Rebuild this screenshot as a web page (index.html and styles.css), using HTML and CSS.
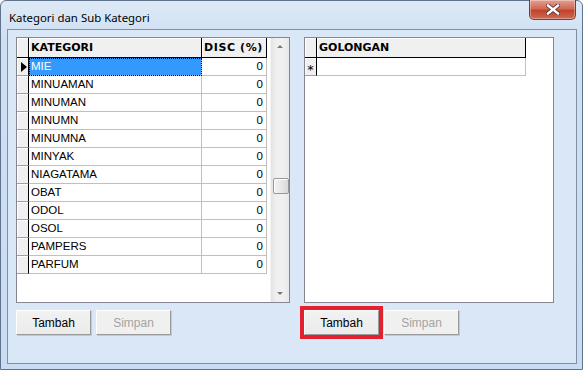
FILE: index.html
```html
<!DOCTYPE html>
<html lang="id">
  <head>
    <meta charset="UTF-8" />
    <title>Kategori dan Sub Kategori</title>
    <link rel="stylesheet" href="styles.css">
  </head>
  <body>
    <div class="window">
      <div class="titlebar">
        <span class="title">Kategori dan Sub Kategori</span>
        <div class="close">
          <svg width="14" height="11" viewBox="0 0 14 11">
            <path d="M2 1.5 L12 9.5 M12 1.5 L2 9.5" stroke="#5a2a22" stroke-width="4" stroke-linecap="square" />
            <path d="M2 1.5 L12 9.5 M12 1.5 L2 9.5" stroke="#ffffff" stroke-width="2.4" stroke-linecap="square" />
          </svg>
        </div>
      </div>

      <div class="client">
        <div class="panels">
          <!-- kategori -->
          <div class="panel panel-left">
            <div class="grid">
              <div class="grid-body">
                <div class="row head">
                  <div class="sel"></div>
                  <div class="cell c-kat">KATEGORI</div>
                  <div class="cell c-disc">DISC (%)</div>
                </div>
                <div class="row">
                  <div class="sel"><span class="pointer"></span></div>
                  <div class="cell c-kat selected">MIE</div>
                  <div class="cell c-disc num">0</div>
                </div>
                <div class="row"><div class="sel"></div><div class="cell c-kat">MINUAMAN</div><div class="cell c-disc num">0</div></div>
                <div class="row"><div class="sel"></div><div class="cell c-kat">MINUMAN</div><div class="cell c-disc num">0</div></div>
                <div class="row"><div class="sel"></div><div class="cell c-kat">MINUMN</div><div class="cell c-disc num">0</div></div>
                <div class="row"><div class="sel"></div><div class="cell c-kat">MINUMNA</div><div class="cell c-disc num">0</div></div>
                <div class="row"><div class="sel"></div><div class="cell c-kat">MINYAK</div><div class="cell c-disc num">0</div></div>
                <div class="row"><div class="sel"></div><div class="cell c-kat">NIAGATAMA</div><div class="cell c-disc num">0</div></div>
                <div class="row"><div class="sel"></div><div class="cell c-kat">OBAT</div><div class="cell c-disc num">0</div></div>
                <div class="row"><div class="sel"></div><div class="cell c-kat">ODOL</div><div class="cell c-disc num">0</div></div>
                <div class="row"><div class="sel"></div><div class="cell c-kat">OSOL</div><div class="cell c-disc num">0</div></div>
                <div class="row"><div class="sel"></div><div class="cell c-kat">PAMPERS</div><div class="cell c-disc num">0</div></div>
                <div class="row"><div class="sel"></div><div class="cell c-kat">PARFUM</div><div class="cell c-disc num">0</div></div>
              </div>
              <div class="vscroll">
                <div class="sb-btn"><span class="tri-up"></span></div>
                <div class="sb-track"><div class="sb-thumb"></div></div>
                <div class="sb-btn"><span class="tri-down"></span></div>
              </div>
            </div>
            <div class="buttons">
              <button type="button" class="btn">Tambah</button>
              <button type="button" class="btn" disabled>Simpan</button>
            </div>
          </div>

          <!-- golongan -->
          <div class="panel panel-right">
            <div class="grid">
              <div class="grid-body">
                <div class="row head">
                  <div class="sel"></div>
                  <div class="cell c-gol">GOLONGAN</div>
                </div>
                <div class="row">
                  <div class="sel star">*</div>
                  <div class="cell c-gol"></div>
                </div>
              </div>
            </div>
            <div class="buttons">
              <button type="button" class="btn marked">Tambah</button>
              <button type="button" class="btn" disabled>Simpan</button>
            </div>
          </div>
        </div>
      </div>
    </div>
  </body>
</html>
```

FILE: styles.css
```css
* {
  box-sizing: border-box;
}

body {
  margin: 0;
  background: #ffffff;
  font-family: "Liberation Sans", Arial, sans-serif;
  font-size: 11px;
  color: #000;
}

.window {
  width: 583px;
  height: 370px;
  display: flex;
  flex-direction: column;
  border: 1px solid #5f738c;
  border-radius: 6px 6px 0 0;
  background: linear-gradient(#dde9f6, #cfe0f3 40px, #cadcf1);
}

/* title bar */
.titlebar {
  height: 28px;
  display: flex;
  align-items: flex-start;
  justify-content: space-between;
}

.title {
  padding: 9px 0 0 8px;
  font-family: "Noto Sans", "Open Sans", sans-serif;
  font-size: 11.4px;
  color: #000;
}

.close {
  width: 47px;
  height: 20px;
  margin: -1px 6px 0 0;
  display: flex;
  align-items: center;
  justify-content: center;
  border: 1px solid #7a3b32;
  border-top: none;
  border-radius: 0 0 5px 5px;
  background: linear-gradient(#e4a090, #d06a56 45%, #c2432c 55%, #cf6a52);
  box-shadow: inset 0 0 0 1px rgba(255, 255, 255, 0.35);
}

/* client area */
.client {
  flex: 1;
  margin: 0 5px 5px 6px;
  border: 1px solid #7f90a6;
  background: #d9e7f7;
  padding: 7px 0 0 8px;
}

.panels {
  display: flex;
  gap: 14px;
}

.panel-left .grid {
  width: 274px;
}

.panel-right .grid {
  width: 250px;
}

.grid {
  height: 266px;
  display: flex;
  border: 1px solid #828790;
  background: #fff;
}

.grid-body {
  display: flex;
  flex-direction: column;
}

.row {
  display: flex;
  height: 18px;
}

.row.head {
  height: 20px;
}

.sel {
  width: 12px;
  flex: none;
  background: #f0f0f0;
  border-right: 1px solid #000;
  border-bottom: 1px solid #a0a0a0;
  box-shadow: inset 1px 1px #fff;
  display: flex;
  align-items: center;
  justify-content: center;
}

.cell {
  flex: none;
  padding: 0 2px;
  font-size: 11.5px;
  line-height: 17px;
  border-right: 1px solid #c0c0c0;
  border-bottom: 1px solid #c0c0c0;
  white-space: nowrap;
  overflow: hidden;
}

.head .sel,
.head .cell {
  background: #f0f0f0;
  border-right: 1px solid #000;
  border-bottom: 1px solid #000;
  box-shadow: inset 1px 1px #fff;
}

.head .cell {
  font-family: "DejaVu Sans", sans-serif;
  font-weight: bold;
  font-size: 11px;
  line-height: 19px;
  padding: 0 2px;
}

.c-kat {
  width: 173px;
}

.c-disc {
  width: 65px;
  letter-spacing: 0.6px;
}

.c-gol {
  width: 209px;
}

.num {
  text-align: right;
  padding-right: 3px;
  letter-spacing: 0;
}

.selected {
  background: #3399ff;
  color: #fff;
  outline: 1px dotted #000;
  outline-offset: -1px;
}

.pointer {
  width: 0;
  height: 0;
  border-top: 5px solid transparent;
  border-bottom: 5px solid transparent;
  border-left: 6px solid #000;
  margin-left: 2px;
}

.star {
  font-family: "DejaVu Sans", sans-serif;
  font-size: 13px;
  line-height: 13px;
  padding-top: 6px;
}

/* scrollbar */
.vscroll {
  width: 19px;
  margin-left: auto;
  display: flex;
  flex-direction: column;
  background: linear-gradient(90deg, #e3e3e3, #f0f0f0 30%, #f0f0f0 70%, #e8e8e8);
  border-left: 1px solid #f4f4f4;
}

.sb-btn {
  height: 17px;
  display: flex;
  align-items: center;
  justify-content: center;
}

.sb-track {
  flex: 1;
  padding: 123px 0 0 2px;
}

.sb-thumb {
  width: 16px;
  height: 16px;
  border: 1px solid #979797;
  border-radius: 2px;
  background: linear-gradient(90deg, #f3f3f3, #e8e8e8 50%, #d8d8d8);
  box-shadow: inset 1px 1px #fff;
}

.tri-up,
.tri-down {
  width: 0;
  height: 0;
  border-left: 3px solid transparent;
  border-right: 3px solid transparent;
}

.tri-up {
  border-bottom: 3px solid #7a7a7a;
}

.tri-down {
  border-top: 3px solid #7a7a7a;
}

/* buttons */
.buttons {
  display: flex;
  gap: 5px;
  margin-top: 7px;
}

.btn {
  width: 75px;
  height: 25px;
  padding: 0;
  font-family: "Liberation Sans", Arial, sans-serif;
  font-size: 12px;
  color: #000;
  background: linear-gradient(#f2f2f2, #ebebeb);
  border: 1px solid;
  border-color: #fff #9a9a9a #9a9a9a #fff;
  box-shadow: 1px 1px 0 #c8c8c8;
}

.btn:disabled {
  color: #a3a3a3;
  background: #f0f0f0;
}

.btn.marked {
  outline: 4px solid #e2202e;
  outline-offset: 0;
}
```
